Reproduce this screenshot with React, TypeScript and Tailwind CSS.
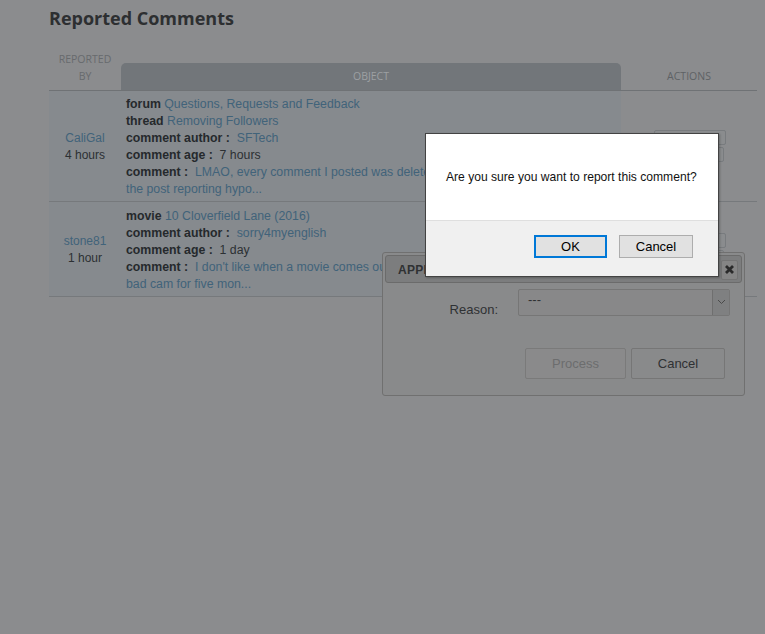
import React from "react";

const Label = ({ children }: { children: React.ReactNode }) => (
  <span className="font-bold text-[#25292c]">{children}</span>
);
const Link = ({ children }: { children: React.ReactNode }) => (
  <span className="text-[#41637a]">{children}</span>
);

function ActionButtons() {
  return (
    <div className="flex flex-col items-center justify-center gap-[2px] pl-[1px]">
      <div className="w-[72px] h-[15px] border border-[#787b7e] rounded-[2px] bg-[#8a8c8e] text-[10px] leading-[13px] text-center text-[#55585b]">
        Approve
      </div>
      <div className="w-[70px] h-[15px] border border-[#787b7e] rounded-[2px] bg-[#8a8c8e] text-[10px] leading-[13px] text-center text-[#55585b] -ml-[2px]">
        Reject
      </div>
    </div>
  );
}

export default function App() {
  return (
    <div className="relative w-[765px] h-[634px] overflow-hidden bg-[#8b8c8e] font-['Liberation_Sans',Arial,sans-serif] text-[12px]">
      <div className="pl-[49px] pr-[8px]">
        <h1 className="pt-[6px] h-[49px] font-['Open_Sans',sans-serif] font-bold text-[18px] leading-[24px] text-[#2d2f31]">
          Reported Comments
        </h1>

        {/* header */}
        <div className="grid grid-cols-[72px_500px_136px] h-[41px] border-b border-[#6f7275] box-content font-['Open_Sans',sans-serif] text-[10.5px] uppercase">
          <div className="text-center leading-[17px] pt-[2px] text-[#676a6d]">
            Reported
            <br />
            By
          </div>
          <div className="self-end h-[27px] rounded-t-[5px] bg-[#72767a] flex items-center justify-center text-[#9da0a3]">
            Object
          </div>
          <div className="self-end h-[27px] flex items-center justify-center text-[#5e6265]">
            Actions
          </div>
        </div>

        {/* row 1 */}
        <div className="grid grid-cols-[72px_500px_136px] border-b border-[#76797c]">
          <div className="bg-[#868a8e] flex flex-col items-center justify-center leading-[17px] pt-[2px]">
            <Link>CaliGal</Link>
            <span className="text-[#2c3033]">4 hours</span>
          </div>
          <div className="bg-[#868a8e] pl-[5px] pt-[5px] pb-[3px] leading-[17px] text-[12.3px] text-[#2c3033] whitespace-nowrap overflow-hidden">
            <div>
              <Label>forum</Label> <Link>Questions, Requests and Feedback</Link>
            </div>
            <div>
              <Label>thread</Label> <Link>Removing Followers</Link>
            </div>
            <div>
              <Label>comment author :</Label>&nbsp; <Link>SFTech</Link>
            </div>
            <div>
              <Label>comment age :</Label>&nbsp; 7 hours
            </div>
            <div>
              <Label>comment :</Label>&nbsp; <Link>LMAO, every comment I posted was deleted and I can&apos;t even find</Link>
            </div>
            <div>
              <Link>the post reporting hypo...</Link>
            </div>
          </div>
          <ActionButtons />
        </div>

        {/* row 2 */}
        <div className="grid grid-cols-[72px_500px_136px] border-b border-[#76797c]">
          <div className="bg-[#868a8e] flex flex-col items-center justify-center leading-[17px] pt-[2px]">
            <Link>stone81</Link>
            <span className="text-[#2c3033]">1 hour</span>
          </div>
          <div className="bg-[#868a8e] pl-[5px] pt-[6px] pb-[3px] leading-[17px] text-[12.3px] text-[#2c3033] whitespace-nowrap overflow-hidden">
            <div>
              <Label>movie</Label> <Link>10 Cloverfield Lane (2016)</Link>
            </div>
            <div>
              <Label>comment author :</Label>&nbsp; <Link>sorry4myenglish</Link>
            </div>
            <div>
              <Label>comment age :</Label>&nbsp; 1 day
            </div>
            <div>
              <Label>comment :</Label>&nbsp; <Link>I don&apos;t like when a movie comes out and all you can find is a</Link>
            </div>
            <div>
              <Link>bad cam for five mon...</Link>
            </div>
          </div>
          <ActionButtons />
        </div>
      </div>

      {/* approve dialog (dimmed, behind) */}
      <div className="absolute left-[382px] top-[252px] w-[363px] h-[144px] border border-[#707070] rounded-[3px] bg-[#898a8b] p-[2px]">
        <div className="h-[28px] border border-[#6b6b6b] rounded-[3px] bg-[#7c7d7e] flex items-center justify-between pl-[12px] pr-[3px] pt-[1px]">
          <span className="font-bold text-[12px] text-[#2f3133] tracking-[0.3px]">APPROVE COMMENT</span>
          <div className="w-[17px] h-[20px] border border-[#747474] rounded-[2px] bg-[#858585] flex items-center justify-center">
            <svg width="11" height="11" viewBox="0 0 11 11">
              <path d="M2 2 L9 9 M9 2 L2 9" stroke="#2a2a2a" strokeWidth="2.8" strokeLinecap="butt" />
            </svg>
          </div>
        </div>
        <div className="flex items-center mt-[6px] h-[26px]">
          <div className="w-[113px] text-right text-[13px] text-[#2f3133] pt-[16px]">Reason:</div>
          <div className="ml-[20px] w-[212px] h-[27px] border border-[#767676] rounded-[2px] bg-[#888889] flex items-stretch">
            <div className="flex-1 pl-[9px] text-[13px] leading-[20px] text-[#2f3133]">---</div>
            <div className="w-[17px] border-l border-[#6f6f6f] bg-[#7f8081] flex items-center justify-center">
              <svg width="9" height="6" viewBox="0 0 9 6">
                <path d="M1 1 L4.5 4.5 L8 1" stroke="#4a4a4a" strokeWidth="1" fill="none" />
              </svg>
            </div>
          </div>
        </div>
        <div className="flex justify-end gap-[5px] mt-[33px] pr-[17px]">
          <div className="w-[101px] h-[31px] border border-[#7a7a7a] rounded-[2px] bg-[#8a8a8b] flex items-center justify-center text-[13px] text-[#6c6d6e]">
            Process
          </div>
          <div className="w-[94px] h-[31px] border border-[#767676] rounded-[2px] bg-[#898a8b] flex items-center justify-center text-[13px] text-[#2f3133]">
            Cancel
          </div>
        </div>
      </div>

      {/* confirm dialog */}
      <div className="absolute left-[425px] top-[133px] w-[294px] h-[144px] border border-[#434343] bg-white flex flex-col shadow-[1px_1px_2px_rgba(0,0,0,0.25)]">
        <div className="h-[86px] flex items-center pl-[20px] text-[12.1px] text-[#111] pt-[1px]">
          Are you sure you want to report this comment?
        </div>
        <div className="flex-1 border-t border-[#dfdfdf] bg-[#f0f0f0] flex justify-end items-start pt-[14px] pr-[25px] gap-[12px]">
          <div className="w-[73px] h-[23px] border-2 border-[#0078d7] bg-[#e1e1e1] flex items-center justify-center text-[13px] text-black">
            OK
          </div>
          <div className="w-[74px] h-[23px] border border-[#adadad] bg-[#e1e1e1] flex items-center justify-center text-[13px] text-black">
            Cancel
          </div>
        </div>
      </div>
    </div>
  );
}
